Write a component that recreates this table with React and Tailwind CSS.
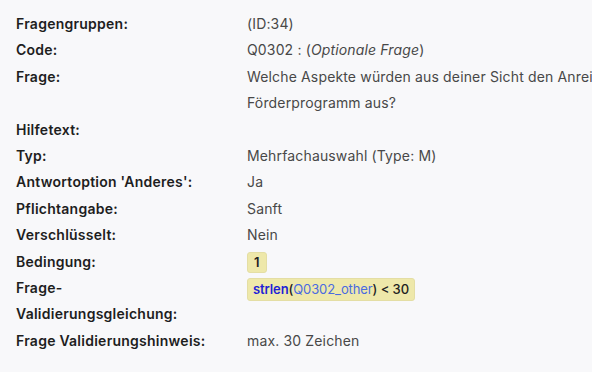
export default function App() {
  const rows = [
    ["Fragengruppen:", <span>(ID:34)</span>],
    ["Code:", <span>Q0302 : (<i>Optionale Frage</i>)</span>],
    [
      "Frage:",
      <span>
        Welche Aspekte würden aus deiner Sicht den Anreiz zur Teilnahme am
        <br />
        Förderprogramm aus?
      </span>,
    ],
    ["Hilfetext:", <span></span>],
    ["Typ:", <span>Mehrfachauswahl (Type: M)</span>],
    ["Antwortoption 'Anderes':", <span>Ja</span>],
    ["Pflichtangabe:", <span>Sanft</span>],
    ["Verschlüsselt:", <span>Nein</span>],
    [
      "Bedingung:",
      <span className="inline-block align-middle rounded-[3px] border border-[#e4dea4] bg-[#eee8aa] px-[6px] text-[13px] leading-[19px] font-semibold tracking-normal text-[#222]">
        1
      </span>,
    ],
    [
      <span>
        Frage-
        <br />
        Validierungsgleichung:
      </span>,
      <span className="inline-block align-middle rounded-[3px] border border-[#e4dea4] bg-[#eee8aa] px-[5px] text-[13px] leading-[21px] font-medium tracking-[-0.1px] text-[#222]">
        <span className="font-semibold text-[#1f1fd6]">strlen</span>(
        <span className="font-normal text-[#4a6be0]">Q0302_other</span>) &lt; 30
      </span>,
    ],
    ["Frage Validierungshinweis:", <span>max. 30 Zeichen</span>],
  ];
  return (
    <div
      className="w-[592px] h-[372px] overflow-hidden bg-[#f8f8fa] pt-[11px] pl-[16px] text-[14px] leading-[26.4px]"
      style={{ fontFamily: "Inter, 'Open Sans', sans-serif" }}
    >
      <div className="grid grid-cols-[231px_auto] w-max">
        {rows.map(([label, value], i) => (
          <div key={i} className="contents">
            <div className="font-semibold tracking-[0.25px] text-[#1e1e1e]">{label}</div>
            <div className="whitespace-nowrap tracking-[0.15px] text-[#484848]">{value}</div>
          </div>
        ))}
      </div>
    </div>
  );
}
